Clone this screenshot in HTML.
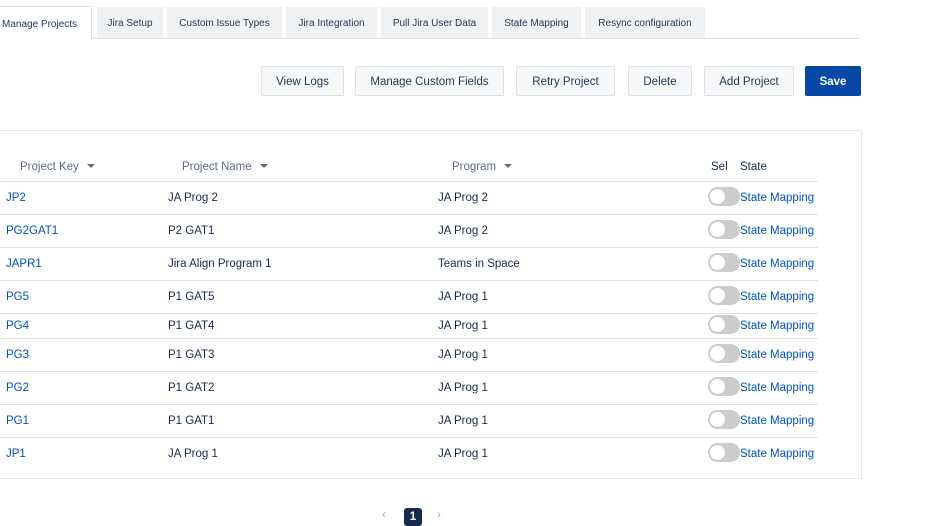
<!DOCTYPE html><html><head><style>
body{margin:0;width:937px;height:516px;overflow:hidden;background:#fff;font-family:"Liberation Sans",sans-serif;font-size:11.5px;color:#172b4d;position:relative}
.a{position:absolute}
.tab{position:absolute;top:7px;height:31px;background:#f0f1f2;line-height:34px;text-align:center;font-size:10px;color:#253858}
.btn{position:absolute;top:66px;height:30px;background:#f7f8f9;border:1px solid #dfe1e6;box-sizing:border-box;line-height:31px;text-align:center;font-size:11.5px;color:#253858;border-radius:2px}
.hl{position:absolute;left:0;width:818px;height:1px;background:#dfe1e6}
.th{position:absolute;top:161px;color:#5e6c84;font-size:11.5px}
.c{position:absolute;font-size:11.5px;margin-top:1px}
.k{color:#0052cc}
.tg{position:absolute;left:708px;width:32px;height:19px;border-radius:10px;background:#ccc}
.tg:after{content:"";position:absolute;left:2px;top:2px;width:15px;height:15px;border-radius:50%;background:#fff}
.ar{display:inline-block;width:0;height:0;border-left:4px solid transparent;border-right:4px solid transparent;border-top:4px solid #5e6c84;margin-left:8px;vertical-align:2px}
</style></head><body>
<div class="a" style="left:0;top:38px;width:860px;height:1px;background:#dfe1e6"></div>
<div class="tab" style="left:0;top:6px;width:92px;height:33px;background:#fff;border:1px solid #dfe1e6;border-bottom:none;border-left:none;box-sizing:border-box;line-height:35px;text-align:left;padding-left:2px">Manage Projects</div>
<div class="tab" style="left:97px;width:66px">Jira Setup</div>
<div class="tab" style="left:167px;width:115px">Custom Issue Types</div>
<div class="tab" style="left:286px;width:91px">Jira Integration</div>
<div class="tab" style="left:381px;width:107px">Pull Jira User Data</div>
<div class="tab" style="left:492px;width:89px">State Mapping</div>
<div class="tab" style="left:585px;width:120px">Resync configuration</div>
<div class="btn" style="left:261px;width:83px">View Logs</div>
<div class="btn" style="left:355px;width:149px">Manage Custom Fields</div>
<div class="btn" style="left:516px;width:99px">Retry Project</div>
<div class="btn" style="left:628px;width:64px">Delete</div>
<div class="btn" style="left:704px;width:90px">Add Project</div>
<div class="btn" style="left:805px;width:56px;background:#0747a6;border-color:#0747a6;color:#fff;font-weight:bold">Save</div>
<div class="a" style="left:-1px;top:130px;width:863px;height:349px;border:1px solid #e4e6ea;box-sizing:border-box"></div>
<div class="th" style="left:20px">Project Key<span class="ar"></span></div>
<div class="th" style="left:182px">Project Name<span class="ar"></span></div>
<div class="th" style="left:452px">Program<span class="ar"></span></div>
<div class="th" style="left:711px;color:#172b4d">Sel</div>
<div class="th" style="left:740px;color:#172b4d">State</div>
<div class="hl" style="top:181px"></div><div class="hl" style="top:214px"></div><div class="hl" style="top:247px"></div><div class="hl" style="top:280px"></div><div class="hl" style="top:313px"></div><div class="hl" style="top:338px"></div><div class="hl" style="top:371px"></div><div class="hl" style="top:404px"></div><div class="hl" style="top:437px"></div>
<div class="c k" style="left:6px;top:191px">JP2</div><div class="c" style="left:168px;top:191px">JA Prog 2</div><div class="c" style="left:438px;top:191px">JA Prog 2</div><div class="tg" style="top:187px"></div><div class="c k" style="left:740px;top:191px">State Mapping</div>
<div class="c k" style="left:6px;top:224px">PG2GAT1</div><div class="c" style="left:168px;top:224px">P2 GAT1</div><div class="c" style="left:438px;top:224px">JA Prog 2</div><div class="tg" style="top:220px"></div><div class="c k" style="left:740px;top:224px">State Mapping</div>
<div class="c k" style="left:6px;top:257px">JAPR1</div><div class="c" style="left:168px;top:257px">Jira Align Program 1</div><div class="c" style="left:438px;top:257px">Teams in Space</div><div class="tg" style="top:253px"></div><div class="c k" style="left:740px;top:257px">State Mapping</div>
<div class="c k" style="left:6px;top:290px">PG5</div><div class="c" style="left:168px;top:290px">P1 GAT5</div><div class="c" style="left:438px;top:290px">JA Prog 1</div><div class="tg" style="top:286px"></div><div class="c k" style="left:740px;top:290px">State Mapping</div>
<div class="c k" style="left:6px;top:319px">PG4</div><div class="c" style="left:168px;top:319px">P1 GAT4</div><div class="c" style="left:438px;top:319px">JA Prog 1</div><div class="tg" style="top:315px"></div><div class="c k" style="left:740px;top:319px">State Mapping</div>
<div class="c k" style="left:6px;top:348px">PG3</div><div class="c" style="left:168px;top:348px">P1 GAT3</div><div class="c" style="left:438px;top:348px">JA Prog 1</div><div class="tg" style="top:344px"></div><div class="c k" style="left:740px;top:348px">State Mapping</div>
<div class="c k" style="left:6px;top:381px">PG2</div><div class="c" style="left:168px;top:381px">P1 GAT2</div><div class="c" style="left:438px;top:381px">JA Prog 1</div><div class="tg" style="top:377px"></div><div class="c k" style="left:740px;top:381px">State Mapping</div>
<div class="c k" style="left:6px;top:414px">PG1</div><div class="c" style="left:168px;top:414px">P1 GAT1</div><div class="c" style="left:438px;top:414px">JA Prog 1</div><div class="tg" style="top:410px"></div><div class="c k" style="left:740px;top:414px">State Mapping</div>
<div class="c k" style="left:6px;top:447px">JP1</div><div class="c" style="left:168px;top:447px">JA Prog 1</div><div class="c" style="left:438px;top:447px">JA Prog 1</div><div class="tg" style="top:443px"></div><div class="c k" style="left:740px;top:447px">State Mapping</div>
<div class="c" style="left:382px;top:506px;color:#a5adba;font-size:12px">‹</div>
<div class="a" style="left:404px;top:508px;width:18px;height:18px;background:#172b4d;border-radius:3px;color:#fff;text-align:center;font-weight:bold;line-height:18px">1</div>
<div class="c" style="left:437px;top:506px;color:#a5adba;font-size:12px">›</div>
</body></html>
